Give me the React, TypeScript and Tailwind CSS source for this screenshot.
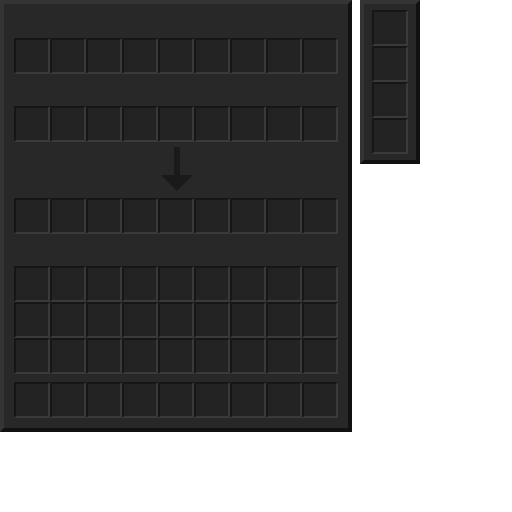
const Slot = () => (
  <div className="w-9 h-9 box-border border-2 border-t-[#161616] border-l-[#161616] border-b-[#3a3a3a] border-r-[#3a3a3a] bg-[#232323]" />
)

const Row = ({ n = 9 }: { n?: number }) => (
  <div className="flex">
    {Array.from({ length: n }).map((_, i) => (
      <Slot key={i} />
    ))}
  </div>
)

export default function App() {
  return (
    <div className="flex items-start gap-2 bg-white w-[512px] h-[512px]">
      <div className="w-[352px] h-[432px] box-border border-4 border-t-[#343434] border-l-[#343434] border-b-[#111111] border-r-[#111111] bg-[#282828] pt-[34px] px-[10px] flex flex-col">
        <Row />
        <div className="h-8" />
        <Row />
        <div className="h-[56px] flex items-center justify-center">
          <svg width="34" height="46" viewBox="0 0 34 46" className="ml-[1px]">
            <rect x="14" y="0" width="6" height="30" fill="#1a1a1a" />
            <polygon points="1,28 33,28 17,44" fill="#1a1a1a" />
          </svg>
        </div>
        <Row />
        <div className="h-8" />
        <Row />
        <Row />
        <Row />
        <div className="h-2" />
        <Row />
      </div>
      <div className="w-[60px] h-[164px] box-border border-4 border-t-[#343434] border-l-[#343434] border-b-[#111111] border-r-[#111111] bg-[#282828] pt-[6px] pl-[8px] flex flex-col">
        <Slot />
        <Slot />
        <Slot />
        <Slot />
      </div>
    </div>
  )
}
